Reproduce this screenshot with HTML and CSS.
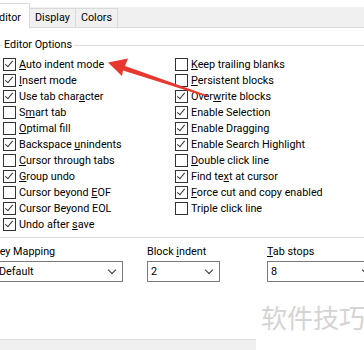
FILE: index.html
```html
<!DOCTYPE html>
<html lang="en">
  <head>
    <meta charset="UTF-8" />
    <title>Editor Options</title>
    <link rel="stylesheet" href="styles.css">
  </head>
  <body>
    <div class="dialog">
      <div class="tabbar">
        <div class="tab tab-active">Editor</div>
        <div class="tab">Display</div>
        <div class="tab">Colors</div>
      </div>

      <div class="page">
        <div class="group">
          <div class="group-title">Editor Options</div>
          <div class="cols">
            <ul class="col col-left">
              <li class="on"><span class="box"></span><span><u>A</u>uto indent mode</span></li>
              <li class="on"><span class="box"></span><span><u>I</u>nsert mode</span></li>
              <li class="on"><span class="box"></span><span>Use tab char<u>a</u>cter</span></li>
              <li><span class="box"></span><span>S<u>m</u>art tab</span></li>
              <li><span class="box"></span><span><u>O</u>ptimal fill</span></li>
              <li class="on"><span class="box"></span><span>Backspace <u>u</u>nindents</span></li>
              <li><span class="box"></span><span><u>C</u>ursor through tabs</span></li>
              <li class="on"><span class="box"></span><span><u>G</u>roup undo</span></li>
              <li><span class="box"></span><span>Cursor beyond <u>E</u>OF</span></li>
              <li class="on"><span class="box"></span><span>Cursor Beyond EOL</span></li>
              <li class="on"><span class="box"></span><span>Undo after <u>s</u>ave</span></li>
            </ul>
            <ul class="col">
              <li><span class="box"></span><span><u>K</u>eep trailing blanks</span></li>
              <li><span class="box"></span><span><u>P</u>ersistent blocks</span></li>
              <li class="on"><span class="box"></span><span>Over<u>w</u>rite blocks</span></li>
              <li class="on"><span class="box"></span><span>Enable Selection</span></li>
              <li class="on"><span class="box"></span><span>Enable Dragging</span></li>
              <li class="on"><span class="box"></span><span>Enable Search Highlight</span></li>
              <li><span class="box"></span><span><u>D</u>ouble click line</span></li>
              <li class="on"><span class="box"></span><span>Find te<u>x</u>t at cursor</span></li>
              <li class="on"><span class="box"></span><span><u>F</u>orce cut and copy enabled</span></li>
              <li><span class="box"></span><span>Triple click line</span></li>
            </ul>
          </div>
        </div>

        <div class="fields">
          <div class="field field-keys">
            <div class="field-label">Key Mapping</div>
            <div class="combo">Default<span class="chev"></span></div>
          </div>
          <div class="field field-indent">
            <div class="field-label">Block <u>i</u>ndent</div>
            <div class="combo">2<span class="chev"></span></div>
          </div>
          <div class="field field-tabs">
            <div class="field-label"><u>T</u>ab stops</div>
            <div class="combo">8<span class="chev"></span></div>
          </div>
        </div>
      </div>

      <div class="buttons">
        <button class="btn btn-default">OK</button>
        <button class="btn">Cancel</button>
      </div>

      <div class="watermark">软件技巧</div>

      <svg class="arrow" width="364" height="350" viewBox="0 0 364 350">
        <polygon points="108,62.5 128,58.5 125,66 208,95.5 207.5,97 123,70.5 122,76" fill="#e8372f" />
      </svg>
    </div>
  </body>
</html>
```

FILE: styles.css
```css
body {
  margin: 0;
  font-family: Roboto, "Liberation Sans", sans-serif;
  font-size: 10.8px;
  color: #000;
  background-color: #fff;
}
.dialog {
  position: relative;
  width: 364px;
  height: 350px;
  overflow: hidden;
}
.tabbar {
  display: flex;
  align-items: flex-end;
  height: 20px;
  border-top: 7px solid #fff;
  border-bottom: 1px solid #d9d9d9;
  background-color: #f0f0f0;
}
.tab {
  flex: none;
  height: 19px;
  line-height: 18px;
  padding: 0 5px;
  border: 1px solid #d9d9d9;
  border-bottom: none;
  box-sizing: border-box;
  background-color: #f0f0f0;
}
.tab + .tab {
  margin-left: -1px;
}
.tab-active {
  height: 25px;
  margin-left: -13px;
  margin-bottom: -1px;
  padding: 5px 8px 0 5px;
  background-color: #fff;
  position: relative;
  z-index: 1;
}
.page {
  height: 295px;
  border-bottom: 1px solid #dfdfdf;
  box-sizing: border-box;
}
.group {
  margin: 17px -6px 0 -6px;
  padding-bottom: 5px;
  border: 1px solid #dcdcdc;
}
.group-title {
  width: fit-content;
  margin: -9px 0 0 7px;
  padding: 0 2px;
  line-height: 16px;
  background-color: #fff;
}
.cols {
  display: flex;
  margin-top: 3px;
  padding-left: 8px;
}
.col {
  list-style: none;
  margin: 0;
  padding: 0;
}
.col-left {
  width: 172px;
}
.col li {
  display: flex;
  align-items: center;
  gap: 3px;
  height: 16px;
  white-space: nowrap;
}
.box {
  position: relative;
  flex: none;
  width: 13px;
  height: 13px;
  border: 1px solid #333;
  box-sizing: border-box;
  background-color: #fff;
}
.on .box::after {
  content: "";
  position: absolute;
  left: 3px;
  top: 0px;
  width: 3px;
  height: 7px;
  border-right: 1px solid #333;
  border-bottom: 1px solid #333;
  transform: rotate(40deg);
}
.fields {
  display: flex;
  margin: 6px 0 0 -5px;
}
.field {
  flex: none;
}
.field-label {
  line-height: 16px;
  white-space: nowrap;
}
.field-keys {
  width: 128px;
}
.field-indent {
  width: 73px;
  margin-left: 24px;
}
.field-tabs {
  width: 110px;
  margin-left: 47px;
}
.field-keys .field-label {
  margin-left: -2px;
}
.combo {
  position: relative;
  height: 21px;
  margin-top: 1px;
  padding-left: 3px;
  line-height: 19px;
  border: 1px solid #7a7a7a;
  box-sizing: border-box;
  background-color: #fff;
}
.chev {
  position: absolute;
  right: 7px;
  top: 5px;
  width: 5px;
  height: 5px;
  border-right: 1px solid #333;
  border-bottom: 1px solid #333;
  transform: rotate(45deg);
}
.buttons {
  display: flex;
  gap: 8px;
  height: 26px;
  padding: 11px 0 0 137px;
  background-color: #f0f0f0;
}
.btn {
  flex: none;
  width: 75px;
  height: 23px;
  font-family: inherit;
  font-size: 10.8px;
  border: 1px solid #adadad;
  background-color: #e1e1e1;
  padding: 0;
}
.btn-default {
  width: 72px;
  border: 2px solid #0078d7;
}
.watermark {
  position: absolute;
  left: 256px;
  top: 292px;
  width: 108px;
  height: 58px;
  padding: 10px 0 0 5px;
  box-sizing: border-box;
  font-family: "Noto Sans CJK SC", sans-serif;
  font-size: 26px;
  line-height: 30px;
  color: #d4d4d4;
  background-color: #fff;
  white-space: nowrap;
}
.arrow {
  position: absolute;
  left: 0;
  top: 0;
  pointer-events: none;
}
```
